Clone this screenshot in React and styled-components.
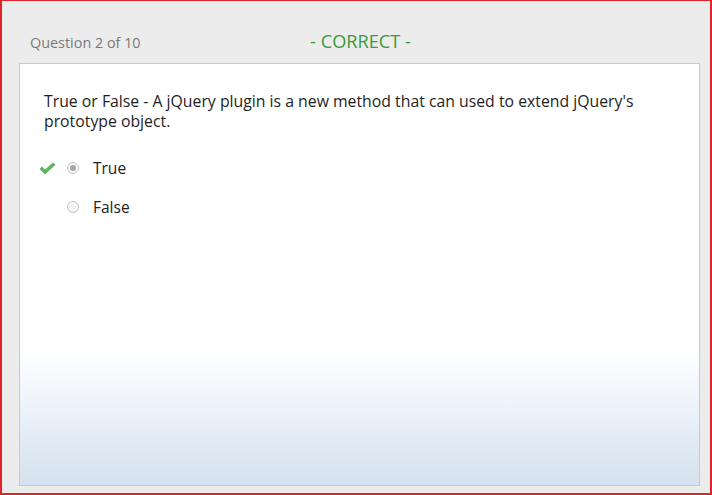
import React from "react";
import styled, { createGlobalStyle } from "styled-components";

const GlobalStyle = createGlobalStyle`
  html, body {
    margin: 0;
    padding: 0;
    background: #ffffff;
  }
  body {
    font-family: "Open Sans", "Noto Sans", sans-serif;
  }
`;

const Frame = styled.div`
  box-sizing: border-box;
  width: 712px;
  height: 495px;
  border-top: 1px solid #e0242c;
  border-left: 2px solid #e0242c;
  border-right: 2px solid #e0242c;
  border-bottom: 2px solid #e0242c;
  background: #ececec;
  padding: 0 10px 7px 17px;
  display: flex;
  flex-direction: column;
`;

const Header = styled.div`
  height: 62px;
  display: flex;
  align-items: flex-end;
  padding: 0 0 11px 11px;
  box-sizing: border-box;
  position: relative;
`;

const Counter = styled.div`
  font-size: 14.4px;
  color: #7a7a7a;
`;

const Status = styled.div`
  position: absolute;
  left: 2px;
  right: 0;
  top: 28px;
  text-align: center;
  font-size: 18.2px;
  color: #3b9a3b;
`;

const Panel = styled.div`
  flex: 1;
  border: 1px solid #c9c9c9;
  background: linear-gradient(
    to bottom,
    #ffffff 0%,
    #ffffff 68%,
    #f4f8fd 76%,
    #d4e1ee 100%
  );
  padding: 28px 24px 0 24px;
  box-sizing: border-box;
`;

const Prompt = styled.p`
  margin: 0 0 27px 0;
  font-size: 15.8px;
  line-height: 19.5px;
  color: #1e1e1e;
`;

const Options = styled.div`
  display: flex;
  flex-direction: column;
  gap: 19px;
`;

const Option = styled.label`
  display: flex;
  align-items: center;
  height: 20px;
  font-size: 15.5px;
  color: #222;
`;

const Mark = styled.span`
  width: 22px;
  display: flex;
  align-items: center;
  justify-content: flex-start;
  margin-left: -5px;
  margin-right: 6px;
`;

const Radio = styled.span`
  width: 12px;
  height: 12px;
  border-radius: 50%;
  box-sizing: border-box;
  border: 1px solid #c4c4c4;
  background: radial-gradient(circle, #f2f2f2 0%, #fafafa 100%);
  display: flex;
  align-items: center;
  justify-content: center;
  margin-right: 14px;
  &::after {
    content: "";
    width: 6px;
    height: 6px;
    border-radius: 50%;
    background: ${(p) => (p.checked ? "#a9a9a9" : "transparent")};
  }
`;

const Check = () => (
  <svg width="17" height="13" viewBox="0 0 17 13">
    <path d="M0.5 7 L3 4.6 L6 7.4 L14 0.5 L16.5 2.8 L6 12.5 Z" fill="#5cb85c" />
  </svg>
);

export default function App() {
  const options = [
    { label: "True", checked: true, correct: true },
    { label: "False", checked: false, correct: false },
  ];
  return (
    <>
      <GlobalStyle />
      <Frame>
        <Header>
          <Counter>Question 2 of 10</Counter>
          <Status>- CORRECT -</Status>
        </Header>
        <Panel>
          <Prompt>
            True or False - A jQuery plugin is a new method that can used to
            extend jQuery's prototype object.
          </Prompt>
          <Options>
            {options.map((o) => (
              <Option key={o.label}>
                <Mark>{o.correct ? <Check /> : null}</Mark>
                <Radio checked={o.checked} />
                {o.label}
              </Option>
            ))}
          </Options>
        </Panel>
      </Frame>
    </>
  );
}
